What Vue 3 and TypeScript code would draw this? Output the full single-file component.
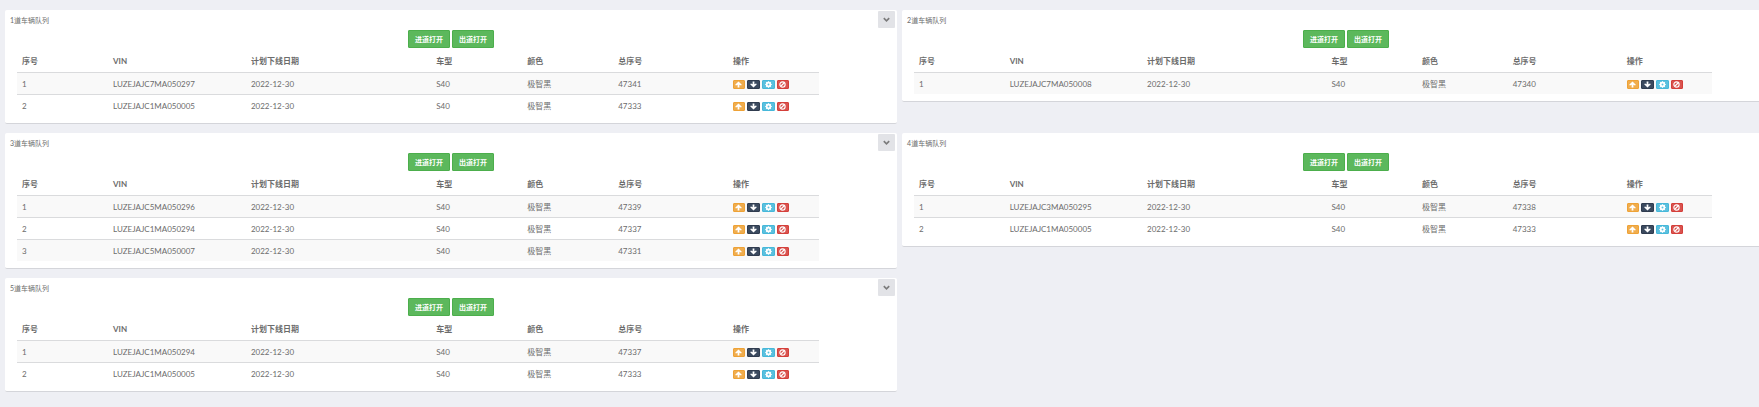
<script setup lang="ts">
interface Vehicle {
  vin: string
  no: number
}
interface Lane {
  id: number
  rows: Vehicle[]
}

const lanes: Lane[] = [
  { id: 1, rows: [{ vin: 'LUZEJAJC7MA050297', no: 47341 }, { vin: 'LUZEJAJC1MA050005', no: 47333 }] },
  { id: 2, rows: [{ vin: 'LUZEJAJC7MA050008', no: 47340 }] },
  {
    id: 3,
    rows: [
      { vin: 'LUZEJAJC5MA050296', no: 47339 },
      { vin: 'LUZEJAJC1MA050294', no: 47337 },
      { vin: 'LUZEJAJC5MA050007', no: 47331 },
    ],
  },
  { id: 4, rows: [{ vin: 'LUZEJAJC3MA050295', no: 47338 }, { vin: 'LUZEJAJC1MA050005', no: 47333 }] },
  { id: 5, rows: [{ vin: 'LUZEJAJC1MA050294', no: 47337 }, { vin: 'LUZEJAJC1MA050005', no: 47333 }] },
]
const heads = ['序号', 'VIN', '计划下线日期', '车型', '颜色', '总序号', '操作']
</script>

<template>
  <main class="page">
    <section v-for="lane in lanes" :key="lane.id" class="panel">
      <header class="panel-head">
        <h2>{{ lane.id }}道车辆队列</h2>
        <button type="button" class="toggle" aria-label="折叠">
          <svg viewBox="0 0 10 10"><path d="M2 3.5 L5 6.5 L8 3.5" fill="none" stroke="currentColor" stroke-width="1.8" /></svg>
        </button>
      </header>
      <div class="gates">
        <button type="button" class="gate">进道打开</button>
        <button type="button" class="gate">出道打开</button>
      </div>
      <table>
        <colgroup>
          <col class="c-s" /><col class="c-vin" /><col class="c-date" /><col class="c-s" /><col class="c-s" /><col class="c-no" /><col class="c-s" />
        </colgroup>
        <thead>
          <tr><th v-for="h in heads" :key="h" scope="col">{{ h }}</th></tr>
        </thead>
        <tbody>
          <tr v-for="(r, i) in lane.rows" :key="i">
            <td>{{ i + 1 }}</td>
            <td>{{ r.vin }}</td>
            <td>2022-12-30</td>
            <td>S40</td>
            <td>极智黑</td>
            <td>{{ r.no }}</td>
            <td>
              <div class="ops">
                <button type="button" class="op up" aria-label="上移">
                  <svg viewBox="0 0 8 8"><path d="M4 .5 L7.8 4.2 L6.9 5.2 L5 4.4 V7.5 H3 V4.4 L1.1 5.2 L.2 4.2 Z" fill="currentColor" /></svg>
                </button>
                <button type="button" class="op down" aria-label="下移">
                  <svg viewBox="0 0 8 8"><path d="M4 7.5 L7.8 3.8 L6.9 2.8 L5 3.6 V.5 H3 V3.6 L1.1 2.8 L.2 3.8 Z" fill="currentColor" /></svg>
                </button>
                <button type="button" class="op set" aria-label="设置">
                  <svg viewBox="0 0 8 8"><circle cx="4" cy="4" r="2.1" fill="none" stroke="currentColor" stroke-width="2" /><path d="M4 .3V1.5M4 6.5V7.7M.3 4H1.5M6.5 4H7.7M1.4 1.4L2.2 2.2M5.8 5.8L6.6 6.6M1.4 6.6L2.2 5.8M5.8 2.2L6.6 1.4" stroke="currentColor" stroke-width="1.4" /></svg>
                </button>
                <button type="button" class="op ban" aria-label="禁用">
                  <svg viewBox="0 0 8 8"><circle cx="4" cy="4" r="3" fill="none" stroke="currentColor" stroke-width="1.3" /><path d="M2 6L6 2" stroke="currentColor" stroke-width="1.3" /></svg>
                </button>
              </div>
            </td>
          </tr>
        </tbody>
      </table>
    </section>
  </main>
</template>

<style>
html,
body {
  background: #eeeff4;
  overflow: hidden;
}
</style>

<style scoped>
.page {
  display: grid;
  grid-template-columns: 50.86% 50.63%;
  align-items: start;
  gap: 9px 5px;
  padding: 10px 0 14px 5px;
  font-family: Lato, 'Noto Sans CJK SC', sans-serif;
  font-size: 8px;
  line-height: 12px;
  color: #6c6c6c;
}
.panel {
  padding-bottom: 7px;
  background: #fff;
  border-bottom: 1px solid #d4d5da;
  border-radius: 2px;
}
.panel-head {
  display: flex;
  justify-content: space-between;
  align-items: center;
  height: 19px;
  padding: 0 2px 0 5px;
}
h2 {
  margin: 0;
  font-size: 7px;
  font-weight: 400;
}
.toggle {
  display: flex;
  align-items: center;
  justify-content: center;
  width: 17px;
  height: 17px;
  padding: 0;
  border: 0;
  border-radius: 1px;
  background: #e2e3e7;
  color: #7b7b7b;
}
.toggle svg {
  width: 9px;
  height: 9px;
}
.gates {
  display: flex;
  justify-content: center;
  gap: 2px;
  padding-top: 1px;
}
.gate {
  height: 18px;
  padding: 0 6px;
  border: 1px solid #4cae4c;
  border-radius: 1px;
  background: #5cb85c;
  color: #fff;
  font: 700 7px/14px Lato, 'Noto Sans CJK SC', sans-serif;
}
table {
  table-layout: fixed;
  width: 89.9%;
  margin: 2px 0 0 12px;
  border-collapse: collapse;
}
.c-s { width: 11.35%; }
.c-vin { width: 17.2%; }
.c-date { width: 23.1%; }
.c-no { width: 14.3%; }
th,
td {
  padding: 0 5px;
  text-align: left;
  white-space: nowrap;
}
th {
  height: 22px;
  font-weight: 700;
}
td {
  height: 21px;
  border-top: 1px solid #dadbdd;
}
tbody tr:nth-child(odd) {
  background: #f9f9f9;
}
.ops {
  display: flex;
  gap: 2px;
  padding-top: 1px;
}
.op {
  display: flex;
  align-items: center;
  justify-content: center;
  width: 13px;
  height: 9px;
  padding: 0;
  border: 1px solid;
  border-radius: 1px;
}
.op svg {
  flex: none;
  width: 7px;
  height: 7px;
  color: #fff;
}
.up,
.ban {
  width: 12px;
}
.up { background: #f0ad4e; border-color: #eea236; }
.down { background: #3b4a5f; border-color: #303c4f; }
.set { background: #5bc0de; border-color: #46b8da; }
.ban { background: #d9534f; border-color: #d43f3a; }
</style>
